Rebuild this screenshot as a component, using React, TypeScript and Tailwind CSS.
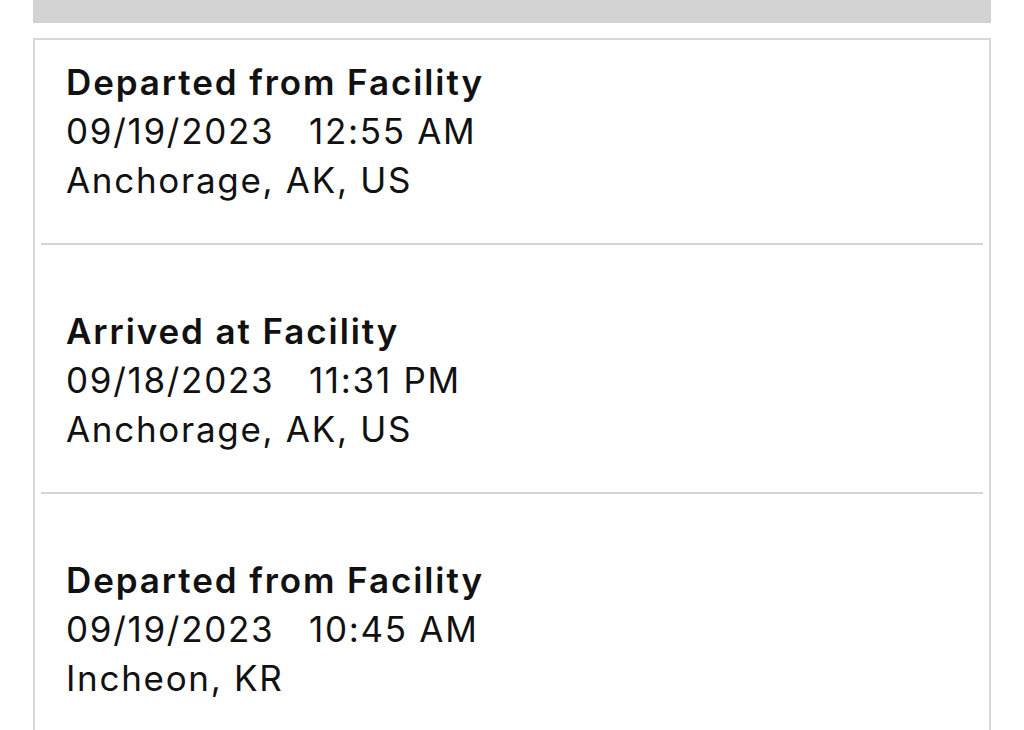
export default function App() {
  const events = [
    { title: "Departed from Facility", date: "09/19/2023", time: "12:55 AM", place: "Anchorage, AK, US" },
    { title: "Arrived at Facility", date: "09/18/2023", time: "11:31 PM", place: "Anchorage, AK, US" },
    { title: "Departed from Facility", date: "09/19/2023", time: "10:45 AM", place: "Incheon, KR" },
  ];

  return (
    <div className="h-[730px] overflow-hidden bg-white" style={{ fontFamily: "Inter, 'Liberation Sans', sans-serif" }}>
      <div className="mx-[33px] h-[23px] bg-[#d3d3d3]" />
      <div className="mx-[33px] mt-[15px] border-2 border-[#d8d8d8] border-b-0 px-[6px] h-[800px]">
        {events.map((e, i) => (
          <div
            key={i}
            className={`${i === 0 ? "pt-[18px]" : "pt-[62px]"} pb-[38px] pl-[25px] ${i < events.length - 1 ? "border-b-2 border-[#d4d4d4]" : ""}`}
          >
            <p className="text-[35px] leading-[49px] font-semibold text-[#111] tracking-[1.9px]">{e.title}</p>
            <p className="text-[35px] leading-[49px] text-[#111] whitespace-pre tracking-[1.7px]">
              {e.date}{"   "}{e.time}
            </p>
            <p className="text-[35px] leading-[49px] text-[#111] tracking-[1.7px]">{e.place}</p>
          </div>
        ))}
      </div>
    </div>
  );
}
